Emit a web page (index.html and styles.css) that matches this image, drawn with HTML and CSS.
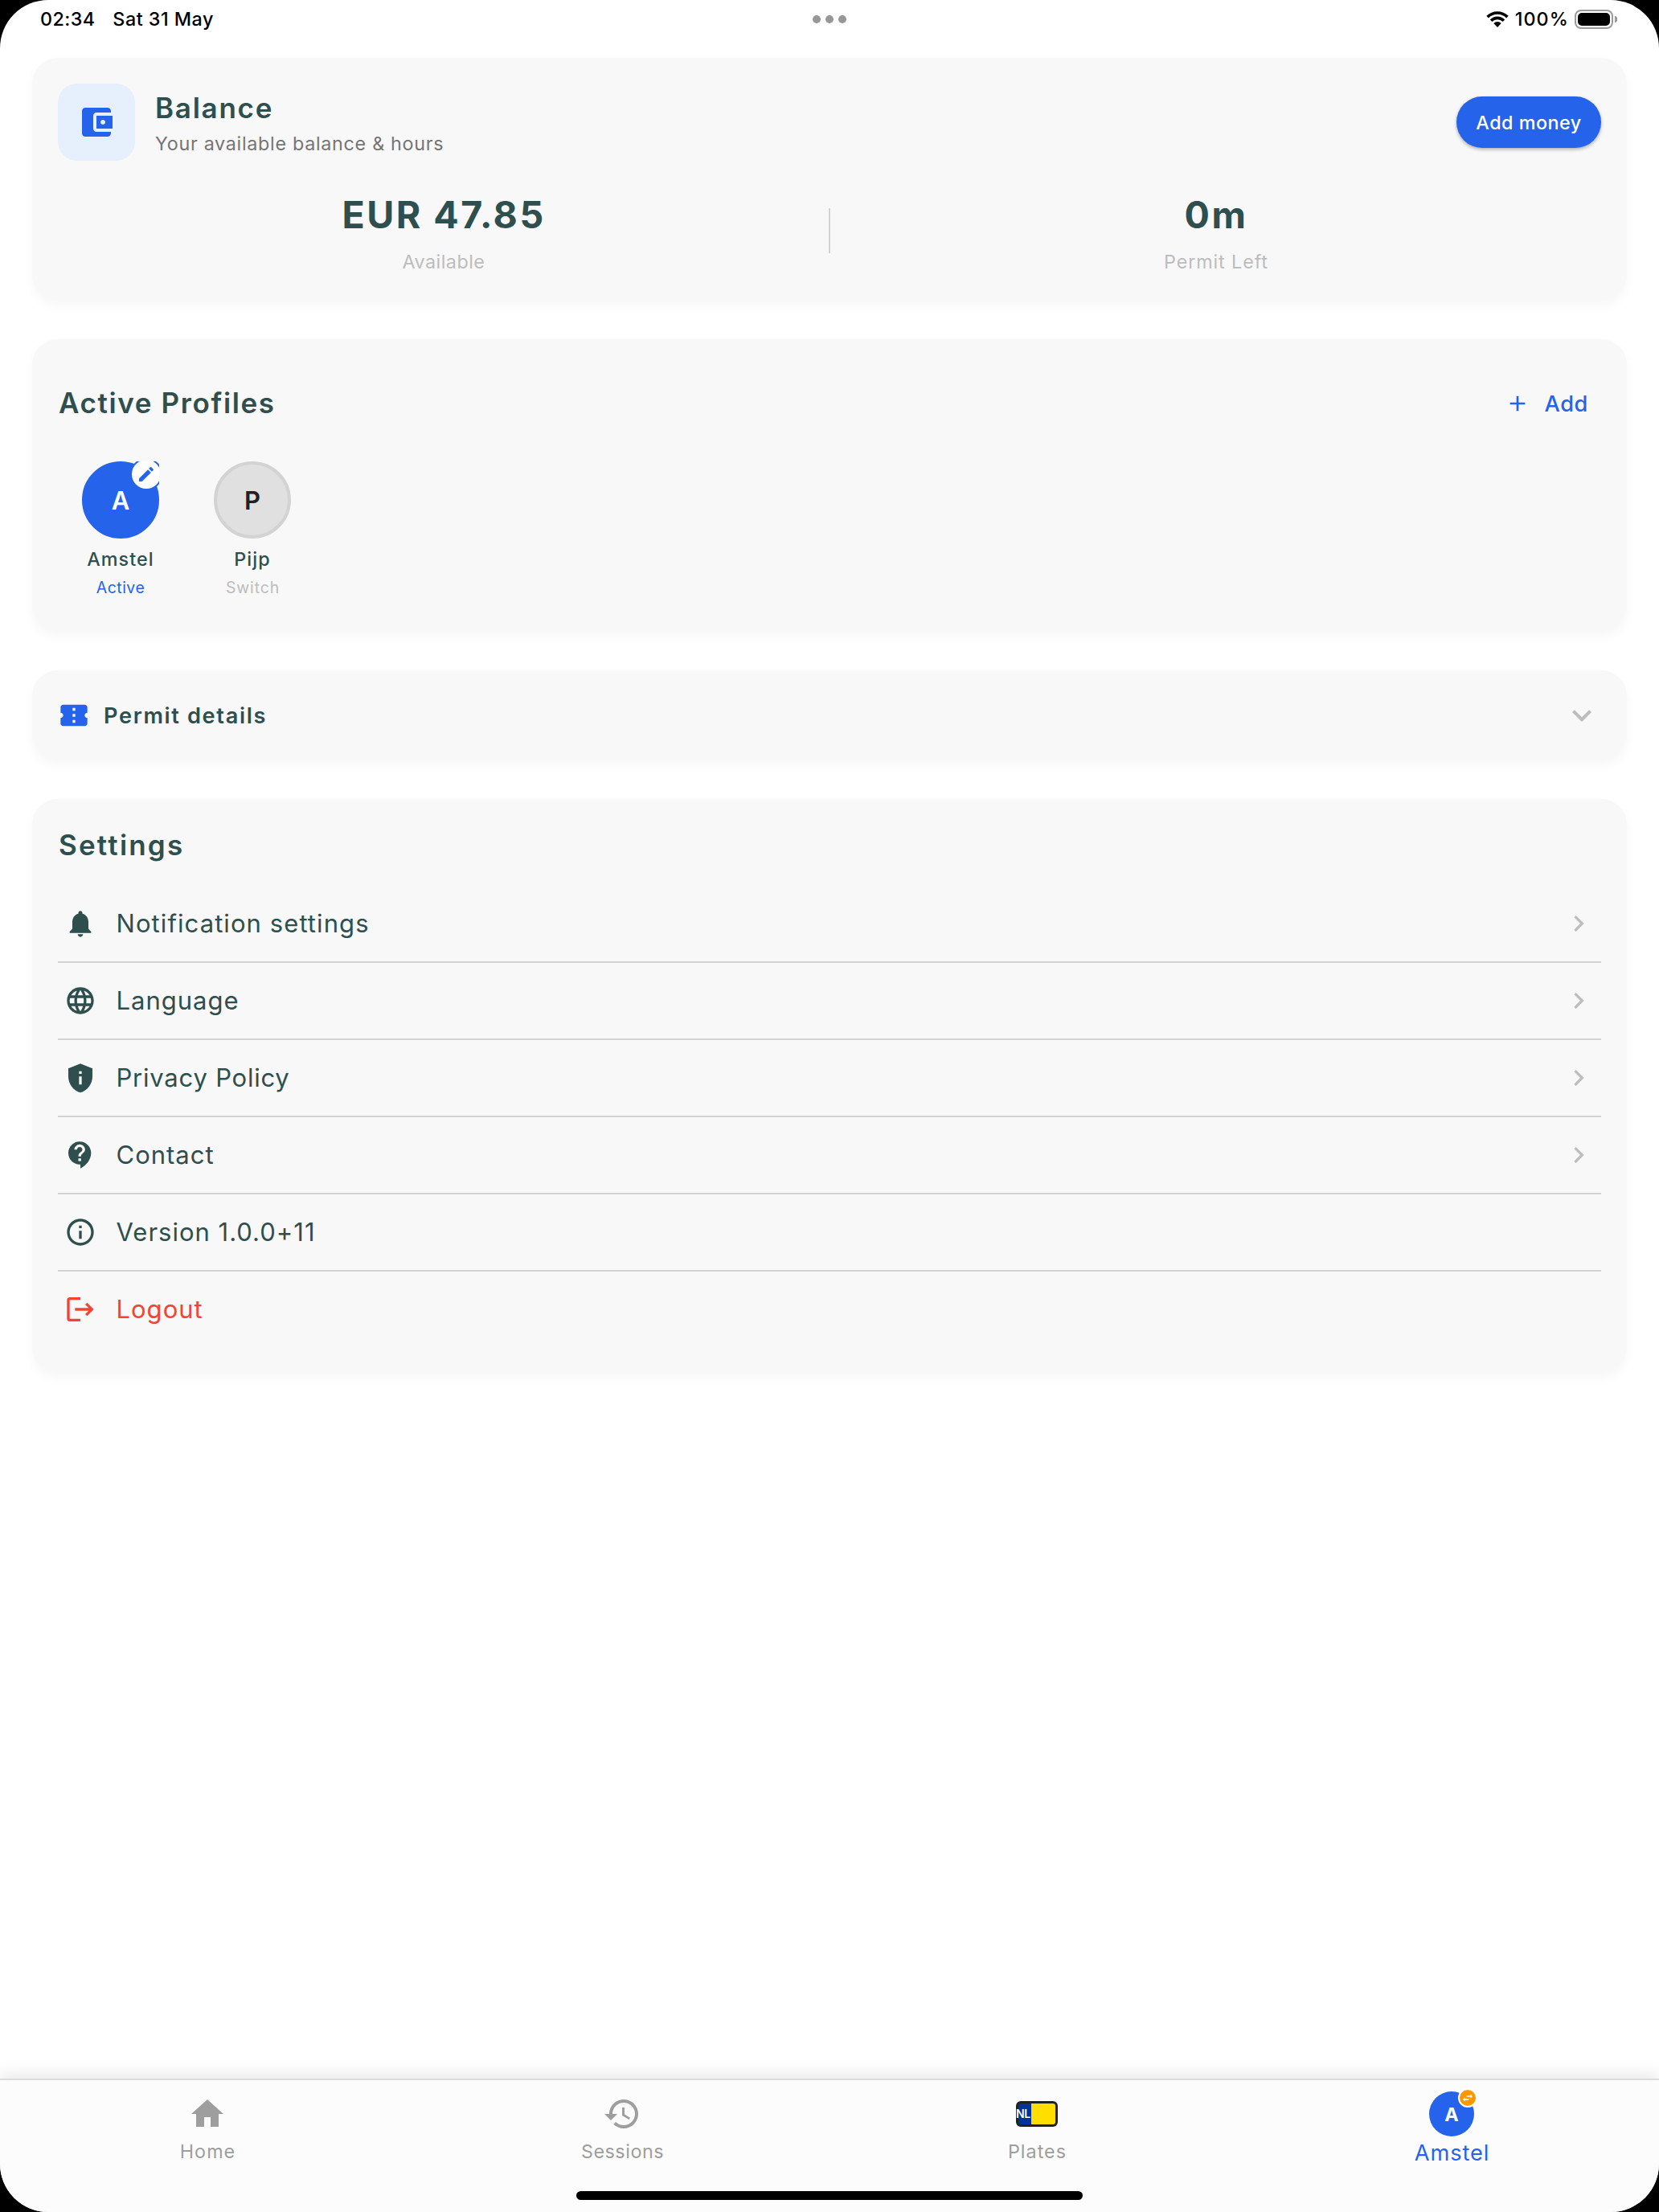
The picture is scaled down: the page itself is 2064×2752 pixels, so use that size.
FILE: index.html
```html
<!DOCTYPE html>
<html lang="en">
<head>
<meta charset="utf-8">
<title>Profile</title>
<link rel="stylesheet" href="styles.css">
</head>
<body>
<div class="screen">
  <header class="status-bar">
    <div class="status-left"><span class="clock">02:34</span><span class="date">Sat 31 May</span></div>
    <div class="status-dots"><i></i><i></i><i></i></div>
    <div class="status-right">
      <svg class="wifi" viewBox="0 0 28 20"><g fill="none" stroke="#000" stroke-width="3.7"><path d="M1.6 7.1a17.6 17.6 0 0 1 24.8 0"/><path d="M6.1 11.7a11.2 11.2 0 0 1 15.8 0"/></g><path d="M9.3 15a6.6 6.6 0 0 1 9.4 0L14 20z"/></svg>
      <span class="percent">100%</span>
      <span class="battery"><span class="battery-body"><i></i></span><b></b></span>
    </div>
  </header>

  <main class="content">
    <section class="card balance-card">
      <div class="balance-head">
        <div class="wallet"><svg viewBox="0 0 24 24"><path d="M21 18v1c0 1.1-.9 2-2 2H5c-1.11 0-2-.9-2-2V5c0-1.1.89-2 2-2h14c1.1 0 2 .9 2 2v1h-9c-1.11 0-2 .9-2 2v8c0 1.1.89 2 2 2h9zm-9-2h10V8H12v8zm4-2.5c-.83 0-1.5-.67-1.5-1.5s.67-1.5 1.5-1.5 1.5.67 1.5 1.5-.67 1.5-1.5 1.5z"/></svg></div>
        <div class="balance-titles">
          <h2 class="title">Balance</h2>
          <p class="subtitle">Your available balance &amp; hours</p>
        </div>
        <button class="add-money">Add money</button>
      </div>
      <div class="stats">
        <div class="stat"><strong>EUR 47.85</strong><span>Available</span></div>
        <div class="stat-divider"></div>
        <div class="stat time"><strong>0m</strong><span>Permit Left</span></div>
      </div>
    </section>

    <section class="card profiles-card">
      <div class="profiles-head">
        <h2 class="title">Active Profiles</h2>
        <button class="add-profile"><svg viewBox="0 0 24 24"><path d="M19 13h-6v6h-2v-6H5v-2h6V5h2v6h6v2z"/></svg><span>Add</span></button>
      </div>
      <div class="profiles">
        <div class="profile active">
          <div class="avatar"><span>A</span><div class="edit-badge"><svg viewBox="0 0 24 24"><path d="M3 17.25V21h3.75L17.81 9.94l-3.75-3.75L3 17.25zM20.71 7.04c.39-.39.39-1.02 0-1.41l-2.34-2.34c-.39-.39-1.02-.39-1.41 0l-1.83 1.83 3.75 3.75 1.83-1.83z"/></svg></div></div>
          <div class="profile-name">Amstel</div>
          <div class="profile-state">Active</div>
        </div>
        <div class="profile">
          <div class="avatar"><span>P</span></div>
          <div class="profile-name">Pijp</div>
          <div class="profile-state">Switch</div>
        </div>
      </div>
    </section>

    <section class="card permit-card">
      <svg class="ticket" viewBox="0 0 24 24"><path d="M22 10V6c0-1.11-.9-2-2-2H4c-1.1 0-1.99.89-1.99 2v4c1.1 0 1.99.9 1.99 2s-.89 2-2 2v4c0 1.1.9 2 2 2h16c1.1 0 2-.9 2-2v-4c-1.1 0-2-.9-2-2s.9-2 2-2zm-9 7.5h-2v-2h2v2zm0-4.5h-2v-2h2v2zm0-4.5h-2v-2h2v2z"/></svg>
      <h3 class="permit-title">Permit details</h3>
      <svg class="expand" viewBox="0 0 24 24"><path d="M16.59 8.59L12 13.17 7.41 8.59 6 10l6 6 6-6z"/></svg>
    </section>

    <section class="card settings-card">
      <h2 class="title">Settings</h2>
      <ul class="settings">
        <li class="row notifications"><svg class="row-icon" viewBox="0 0 24 24"><path d="M12 22c1.1 0 2-.9 2-2h-4c0 1.1.89 2 2 2zm6-6v-5c0-3.07-1.64-5.64-4.5-6.32V4c0-.83-.67-1.5-1.5-1.5s-1.5.67-1.5 1.5v.68C7.63 5.36 6 7.92 6 11v5l-2 2v1h16v-1l-2-2z"/></svg><span>Notification settings</span><svg class="chevron" viewBox="0 0 24 24"><path d="M10 6L8.59 7.41 13.17 12l-4.58 4.59L10 18l6-6z"/></svg></li>
        <li class="row"><svg class="row-icon" viewBox="0 0 24 24"><path d="M11.99 2C6.47 2 2 6.48 2 12s4.47 10 9.99 10C17.52 22 22 17.52 22 12S17.52 2 11.99 2zm6.93 6h-2.95c-.32-1.25-.78-2.45-1.38-3.56 1.84.63 3.37 1.91 4.33 3.56zM12 4.04c.83 1.2 1.48 2.53 1.91 3.96h-3.82c.43-1.43 1.08-2.76 1.91-3.96zM4.26 14C4.1 13.36 4 12.69 4 12s.1-1.36.26-2h3.38c-.08.66-.14 1.32-.14 2s.06 1.34.14 2H4.26zm.82 2h2.95c.32 1.25.78 2.45 1.38 3.56-1.84-.63-3.37-1.9-4.33-3.56zm2.95-8H5.08c.96-1.66 2.49-2.93 4.33-3.56C8.81 5.55 8.35 6.75 8.03 8zM12 19.96c-.83-1.2-1.48-2.53-1.91-3.96h3.82c-.43 1.43-1.08 2.76-1.91 3.96zM14.34 14H9.66c-.09-.66-.16-1.32-.16-2s.07-1.35.16-2h4.68c.09.65.16 1.32.16 2s-.07 1.34-.16 2zm.25 5.56c.6-1.11 1.06-2.31 1.38-3.56h2.95c-.96 1.65-2.49 2.93-4.33 3.56zM16.36 14c.08-.66.14-1.32.14-2s-.06-1.34-.14-2h3.38c.16.64.26 1.31.26 2s-.1 1.36-.26 2h-3.38z"/></svg><span>Language</span><svg class="chevron" viewBox="0 0 24 24"><path d="M10 6L8.59 7.41 13.17 12l-4.58 4.59L10 18l6-6z"/></svg></li>
        <li class="row privacy"><svg class="row-icon" viewBox="0 0 24 24"><path fill-rule="evenodd" d="M12 1.4L3 5v6c0 5.55 3.84 10.74 9 12 5.16-1.26 9-6.45 9-12V5l-9-3.6zM11 7h2v2h-2V7zm0 4h2v6h-2v-6z"/></svg><span>Privacy Policy</span><svg class="chevron" viewBox="0 0 24 24"><path d="M10 6L8.59 7.41 13.17 12l-4.58 4.59L10 18l6-6z"/></svg></li>
        <li class="row"><svg class="row-icon" viewBox="0 0 24 24"><path d="M11.5 2C6.81 2 3 5.81 3 10.5S6.81 19 11.5 19h.5v3c4.86-2.34 8-7 8-11.5C20 5.81 16.19 2 11.5 2zm1 14.5h-2v-2h2v2zm0-3.5h-2c0-3.25 3-3 3-5 0-1.1-.9-2-2-2s-2 .9-2 2h-2c0-2.21 1.79-4 4-4s4 1.79 4 4c0 2.5-3 2.75-3 5z"/></svg><span>Contact</span><svg class="chevron" viewBox="0 0 24 24"><path d="M10 6L8.59 7.41 13.17 12l-4.58 4.59L10 18l6-6z"/></svg></li>
        <li class="row"><svg class="row-icon" viewBox="0 0 24 24"><path d="M11 7h2v2h-2zm0 4h2v6h-2zm1-9C6.48 2 2 6.48 2 12s4.48 10 10 10 10-4.48 10-10S17.52 2 12 2zm0 18c-4.41 0-8-3.59-8-8s3.59-8 8-8 8 3.59 8 8-3.59 8-8 8z"/></svg><span>Version 1.0.0+11</span></li>
        <li class="row logout"><svg class="row-icon" viewBox="0 0 24 24"><path d="M17 7l-1.41 1.41L18.17 11H8v2h10.17l-2.58 2.58L17 17l5-5zM4 5h8V3H4c-1.1 0-2 .9-2 2v14c0 1.1.9 2 2 2h8v-2H4V5z"/></svg><span>Logout</span></li>
      </ul>
    </section>
  </main>

  <nav class="tab-bar">
    <a class="tab"><span class="tab-icon"><svg viewBox="0 0 24 24"><path d="M10 20v-6h4v6h5v-8h3L12 3 2 12h3v8z"/></svg></span><span class="tab-label">Home</span></a>
    <a class="tab sessions"><span class="tab-icon"><svg viewBox="0 0 24 24"><path d="M13 3c-4.97 0-9 4.03-9 9H1l3.89 3.89.07.14L9 12H6c0-3.87 3.13-7 7-7s7 3.13 7 7-3.13 7-7 7c-1.93 0-3.68-.79-4.94-2.06l-1.42 1.42C8.27 19.99 10.51 21 13 21c4.97 0 9-4.03 9-9s-4.03-9-9-9zm-1 5v5l4.28 2.54.72-1.21-3.5-2.08V8z"/></svg></span><span class="tab-label">Sessions</span></a>
    <a class="tab"><span class="tab-icon"><span class="plate"><b>NL</b></span></span><span class="tab-label">Plates</span></a>
    <a class="tab selected"><span class="tab-avatar">A<i class="switch-badge"><svg viewBox="0 0 24 24"><path d="M6.99 11L3 15l3.99 4v-3H14v-2H6.99v-3zM21 9l-3.99-4v3H10v2h7.01v3L21 9z"/></svg></i></span><span class="tab-label">Amstel</span></a>
    <div class="home-indicator"></div>
  </nav>
</div>
</body>
</html>
```
FILE: styles.css
```css
* { box-sizing: border-box; }
html { background: #000; }
body {
  margin: 0;
  background: #000;
  font-family: Inter, "Liberation Sans", sans-serif;
  color: #2f4f4f;
}
h2, h3, p, ul { margin: 0; padding: 0; list-style: none; }
svg { display: block; fill: currentColor; }
button { border: 0; background: none; font: inherit; padding: 0; }

.screen {
  width: 2064px;
  height: 2752px;
  display: flex;
  flex-direction: column;
  background: #fff;
  border-radius: 60px;
  overflow: hidden;
}

/* Status bar */
.status-bar {
  flex: none;
  height: 48px;
  padding: 0 52px;
  display: grid;
  grid-template-columns: 1fr auto 1fr;
  align-items: center;
  color: #000;
  font-size: 23.3px;
  font-weight: 450;
  line-height: 28px;
}
.status-left { display: flex; gap: 22px; margin-left: -2px; }
.clock { letter-spacing: 0.4px; }
.date { letter-spacing: 0.5px; }
.status-dots { display: flex; gap: 6px; }
.status-dots i { width: 10px; height: 10px; border-radius: 50%; background: #979797; }
.status-right { display: flex; align-items: center; justify-content: flex-end; }
.wifi { width: 28px; height: 20px; margin-right: 8px; }
.percent { letter-spacing: 1.1px; }
.battery { display: flex; align-items: center; gap: 2px; margin-left: 7px; }
.battery-body {
  width: 48px;
  height: 24px;
  padding: 2px;
  border: 2px solid #9b9b9b;
  border-radius: 8px;
}
.battery-body i { display: block; height: 100%; border-radius: 5px; background: #000; }
.battery b { width: 3px; height: 8px; border-radius: 0 4px 4px 0; background: #9b9b9b; }

/* Cards */
.content {
  flex: 1;
  padding: 24px 40px 0;
  display: flex;
  flex-direction: column;
  gap: 48px;
}
.card {
  padding: 32px;
  border-radius: 32px;
  background: #f8f8f8;
  box-shadow: 0 6px 14px rgba(0, 0, 0, 0.035);
}
.title { padding-left: 1px; font-size: 35px; font-weight: 600; line-height: 44px; letter-spacing: 1.75px; }

.balance-head { display: flex; align-items: center; height: 96px; }
.wallet {
  width: 96px;
  height: 96px;
  display: grid;
  place-items: center;
  border-radius: 24px;
  background: #e6effc;
  color: #2563eb;
}
.wallet svg { width: 48px; height: 48px; }
.balance-titles { flex: 1; margin-left: 24px; padding-top: 1px; display: flex; flex-direction: column; gap: 9px; }
.subtitle { padding-left: 1px; font-size: 23.3px; line-height: 28px; letter-spacing: 0.71px; color: #757575; }
.add-money {
  width: 180px;
  height: 64px;
  border-radius: 32px;
  background: #2563eb;
  color: #fff;
  font-size: 23.3px;
  font-weight: 500;
  letter-spacing: 0.5px;
  box-shadow: 0 2px 4px rgba(0, 0, 0, 0.3);
}
.stats { height: 110px; margin-top: 32px; display: flex; align-items: center; }
.stat { flex: 1; padding: 4px 0 0 1px; display: flex; flex-direction: column; align-items: center; gap: 16px; }
.stat strong { font-size: 46.5px; font-weight: 650; line-height: 57px; letter-spacing: 2.5px; }
.stat span { font-size: 23.3px; line-height: 28px; letter-spacing: 0.5px; color: #bdbdbd; }
.time span { letter-spacing: 0.9px; }
.stat-divider { width: 2px; height: 56px; background: #d3d3d3; }

.profiles-head { display: flex; align-items: center; justify-content: space-between; height: 96px; }
.profiles-head .title { margin-bottom: 2px; letter-spacing: 1.62px; }
.add-profile {
  display: flex;
  align-items: center;
  gap: 18px;
  padding-right: 16px;
  color: #2563eb;
  font-size: 27.2px;
  font-weight: 500;
  letter-spacing: 0.57px;
}
.add-profile svg { width: 32px; height: 32px; }
.profiles { display: flex; gap: 8px; margin-top: 24px; height: 180px; }
.profile { width: 156px; display: flex; flex-direction: column; align-items: center; }
.avatar {
  position: relative;
  width: 96px;
  height: 96px;
  display: grid;
  place-items: center;
  overflow: hidden;
  font-size: 31px;
  font-weight: 600;
  color: #212121;
}
.avatar::before {
  content: "";
  position: absolute;
  inset: 0;
  border: 4px solid #d3d3d3;
  border-radius: 50%;
  background: #e0e0e0;
}
.avatar span { position: relative; }
.active .avatar { color: #fff; }
.active .avatar::before { background: #2563eb; border-color: #2563eb; }
.edit-badge {
  position: absolute;
  top: -4px;
  right: -4px;
  width: 40px;
  height: 40px;
  display: grid;
  place-items: center;
  border: 2px solid #2563eb;
  border-radius: 50%;
  background: #fff;
  color: #2563eb;
}
.edit-badge svg { width: 24px; height: 24px; }
.profile-name { margin-top: 11px; font-size: 23.3px; font-weight: 550; line-height: 29px; letter-spacing: 1.1px; }
.profile-state { margin-top: 8px; padding-left: 1px; font-size: 19.4px; line-height: 26px; letter-spacing: 0.89px; color: #bdbdbd; }
.active .profile-state { padding-left: 0; color: #2563eb; letter-spacing: 0.54px; }

.permit-card { display: flex; align-items: center; height: 112px; }
.ticket { width: 40px; height: 40px; color: #2563eb; }
.permit-title { flex: 1; margin-left: 17px; padding-top: 1px; font-size: 27.2px; font-weight: 600; line-height: 40px; letter-spacing: 1.64px; }
.expand { width: 48px; height: 48px; color: #bdbdbd; }

.settings-card { height: 714px; }
.settings-card .title { line-height: 51px; letter-spacing: 2.2px; }
.settings { margin-top: 25px; }
.row {
  display: flex;
  align-items: center;
  height: 96px;
  padding: 0 8px;
  border-bottom: 2px solid #d3d3d3;
  font-size: 31px;
  line-height: 38px;
  letter-spacing: 1px;
}
.row:last-child { border-bottom-color: transparent; }
.row-icon { width: 40px; height: 40px; margin-right: 24px; }
.row span { flex: 1; padding-left: 0.5px; }
.notifications { letter-spacing: 1.08px; }
.privacy { letter-spacing: 0.78px; }
.chevron { width: 40px; height: 40px; color: #bdbdbd; }
.logout { color: #f44336; }

/* Bottom navigation */
.tab-bar {
  position: relative;
  flex: none;
  height: 166px;
  display: flex;
  border-top: 2px solid #dcdcdc;
  background: #fcfcfc;
  box-shadow: 0 -4px 20px rgba(0, 0, 0, 0.1);
}
.tab { flex: 1; display: flex; flex-direction: column; align-items: center; color: #9e9e9e; }
.tab-icon { height: 48px; margin-top: 18px; display: grid; place-items: center; }
.tab-icon svg { width: 48px; height: 48px; }
.tab-label { margin-top: 8px; padding-left: 1px; font-size: 23.3px; line-height: 29px; letter-spacing: 1.05px; }
.sessions .tab-label { letter-spacing: 0.55px; }
.selected { color: #2563eb; }
.selected .tab-label { margin-top: 5px; font-size: 27.2px; line-height: 32px; letter-spacing: 0.92px; }
.plate {
  width: 52px;
  height: 32px;
  display: flex;
  align-items: center;
  border: 3px solid #212121;
  border-radius: 6px;
  background: linear-gradient(90deg, #039 16px, #ffde00 16px);
}
.plate b { margin-left: -3px; font-size: 14px; font-weight: 600; line-height: 16px; letter-spacing: -0.3px; color: #fff; }
.tab-avatar {
  position: relative;
  width: 56px;
  height: 56px;
  margin-top: 14px;
  display: grid;
  place-items: center;
  border-radius: 50%;
  background: #2563eb;
  color: #fff;
  font-size: 23.3px;
  font-weight: 700;
}
.switch-badge {
  position: absolute;
  top: -4px;
  right: -4px;
  width: 24px;
  height: 24px;
  display: grid;
  place-items: center;
  border: 2px solid #fff;
  border-radius: 50%;
  background: #ff9800;
}
.switch-badge svg { width: 16px; height: 16px; }
.home-indicator {
  position: absolute;
  left: 717px;
  bottom: 15px;
  width: 630px;
  height: 11px;
  border-radius: 6px;
  background: #000;
}
```
